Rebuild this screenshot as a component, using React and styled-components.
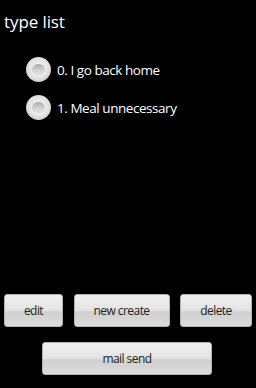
import React from "react";
import styled, { createGlobalStyle } from "styled-components";

const Global = createGlobalStyle`
  html, body { margin: 0; padding: 0; background: #000; }
  body { width: 256px; height: 388px; overflow: hidden; font-family: "Open Sans", "Noto Sans", sans-serif; }
`;

const Screen = styled.div`
  width: 256px;
  height: 388px;
  background: #000;
  display: flex;
  flex-direction: column;
  box-sizing: border-box;
`;

const Title = styled.div`
  color: #fff;
  font-size: 17px;
  line-height: 20px;
  padding: 12px 0 0 4px;
  height: 44px;
  box-sizing: border-box;
  letter-spacing: -0.1px;
`;

const List = styled.div`
  display: flex;
  flex-direction: column;
  gap: 13px;
  padding: 13px 0 0 26px;
  flex: 1;
`;

const Row = styled.label`
  display: flex;
  align-items: center;
  gap: 6px;
  color: #fff;
  font-size: 13.5px;
  height: 25px;
  letter-spacing: -0.45px;
`;

const Radio = styled.span`
  width: 25px;
  height: 25px;
  border-radius: 50%;
  box-sizing: border-box;
  background: radial-gradient(circle at 50% 45%, #f6f6f6 0%, #e4e4e4 50%, #c4c4c4 85%, #a8a8a8 100%);
  display: flex;
  align-items: center;
  justify-content: center;
  &::after {
    content: "";
    width: 13px;
    height: 12px;
    border-radius: 50%;
    background: linear-gradient(#a8a8a8 0%, #cfcfcf 45%, #e6e6e6 100%);
    box-shadow: 0 1px 0 #f4f4f4;
  }
`;

const ButtonRow = styled.div`
  display: flex;
  justify-content: space-between;
  padding: 0 4px 0 4px;
`;

const Button = styled.button`
  width: ${p => p.$w}px;
  height: 33px;
  box-sizing: border-box;
  border: 1px solid #b4b4b4;
  border-radius: 3px;
  background: linear-gradient(#f0f0f0 0%, #e4e4e4 48%, #d0d0d0 55%, #dcdcdc 100%);
  color: #222;
  font-family: "Open Sans", "Noto Sans", sans-serif;
  font-size: 12px;
  padding: 0;
  letter-spacing: -0.55px;
`;

const Bottom = styled.div`
  display: flex;
  flex-direction: column;
  gap: 15px;
  padding-bottom: 13px;
`;

const Center = styled.div`
  display: flex;
  justify-content: center;
  padding-right: 2px;
`;

export default function App() {
  return (
    <>
      <Global />
      <Screen>
        <Title>type list</Title>
        <List>
          <Row><Radio />0. I go back home</Row>
          <Row><Radio />1. Meal unnecessary</Row>
        </List>
        <Bottom>
          <ButtonRow>
            <Button $w={59}>edit</Button>
            <Button $w={96}>new create</Button>
            <Button $w={72}>delete</Button>
          </ButtonRow>
          <Center>
            <Button $w={170}>mail send</Button>
          </Center>
        </Bottom>
      </Screen>
    </>
  );
}
